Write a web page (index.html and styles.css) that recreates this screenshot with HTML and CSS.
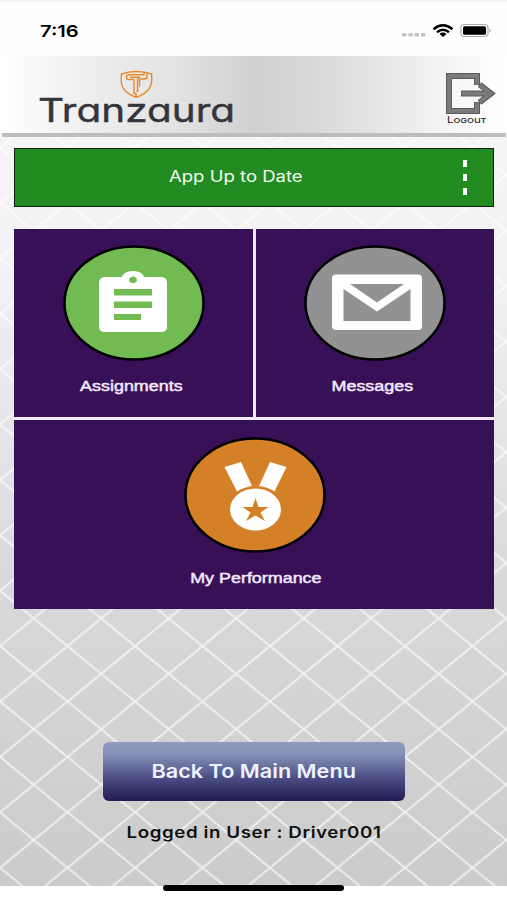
FILE: index.html
```
<!doctype html>
<html lang="en">
<head>
<meta charset="utf-8">
<title>Tranzaura</title>
<meta name="viewport" content="width=device-width, initial-scale=1">
<link rel="stylesheet" href="styles.css">
</head>
<body>
<div class="status">
<span class="time">7:16</span>
<svg class="signal" width="92" height="16" viewBox="0 0 92 16">
<g fill="#c4c4c4"><rect x="2" y="10" width="4.500" height="3.500" rx="1"/><rect x="8.300" y="10" width="4.500" height="3.500" rx="1"/><rect x="14.600" y="10" width="4.500" height="3.500" rx="1"/><rect x="20.900" y="10" width="4.500" height="3.500" rx="1"/></g>
<g fill="none" stroke="#000" stroke-width="2.400"><path d="M33.500 6.200Q43 -1.600 52.500 6.200"/><path d="M37 9.200Q43 4.300 49 9.200"/></g>
<path d="M39.500 10.900Q43 8.200 46.500 10.900L43 14Z"/>
<rect x="61" y="1.500" width="27" height="12" rx="3.500" fill="#fff" stroke="#aaa" stroke-width="1.200"/>
<rect x="63" y="3.200" width="23" height="8.600" rx="1.500"/>
<path d="M89.500 5.500Q92 7.500 89.500 9.500Z" fill="#999"/>
</svg>
</div>
<header>
<svg class="logo" width="200" height="60" viewBox="0 0 200 60" role="img" aria-label="Tranzaura">
<g fill="none" stroke="#e8892a" stroke-width="1.400" stroke-linejoin="round" stroke-linecap="round">
<path d="M98.500 2.500Q90 2.500 83.500 5C82 16 84 23 98.500 28.300C112 23 115 16 113.500 5Q107 2.500 98.500 2.500"/>
<path d="M109 3.500V7.500Q109 10 106.500 10H101.500V17M98 28V24.500H96V10.500H90.500Q88.500 10.500 88.500 8.500Q88.500 5.800 91 5.800H106V3.500"/>
<path d="M92.500 8.200H101.500Q99.500 8.200 99.500 11V21.500"/>
</g>
<circle cx="99.500" cy="22" r="1.100" fill="#e8892a"/>
<text x="0" y="53.300" textLength="197" lengthAdjust="spacingAndGlyphs">Tranzaura</text>
</svg>
<a class="logout">
<svg width="52" height="43" viewBox="0 0 52 43">
<g fill="none" stroke="#5a5a5a" stroke-width="6"><path d="M32 13V4H4V39H32V30"/><path d="M16 21.500H45"/><path d="M34.500 12.500L46 21.500L34.500 30.500"/></g>
<g fill="none" stroke="#7b7b7b" stroke-width="4"><path d="M32 12.500V4H4V39H32V30.500"/><path d="M17 21.500H45"/><path d="M35 13L45.500 21.500L35 30"/></g>
</svg>
<span>Logout</span>
</a>
</header>
<main>
<svg class="mesh" width="507" height="749">
<defs><pattern id="diamonds" width="67.500" height="55.400" patternUnits="userSpaceOnUse" patternTransform="translate(0 10.500)">
<path d="M-6.750 -5.540L74.250 60.940M-6.750 60.940L74.250 -5.540"/>
</pattern></defs>
<rect width="507" height="749" fill="url(#diamonds)"/>
</svg>
<div class="update">
<span class="wide">App Up to Date</span>
<div class="dots"><i></i><i></i><i></i></div>
</div>
<div class="tiles">
<a class="tile assign">
<svg width="142" height="116" viewBox="0 0 142 116">
<ellipse cx="71" cy="58" rx="69.500" ry="56.500" fill="#72bb53"/>
<path fill="#fff" fill-rule="evenodd" d="M42 32H59C61 24 79 24 81 32H98Q104 32 104 38V82Q104 87 98 87H42Q36 87 36 82V38Q36 32 42 32ZM70 31.500a4 3.400 0 1 0 .01 0ZM51 44V50.500H89V44ZM51 56.500V63H89V56.500ZM51 69V75H78V69Z"/>
</svg>
<span>Assignments</span>
</a>
<a class="tile">
<svg width="142" height="116" viewBox="0 0 142 116">
<ellipse cx="71" cy="58" rx="69.500" ry="56.500" fill="#929292"/>
<path fill="#fff" fill-rule="evenodd" d="M32 29.500H114Q118 29.500 118 33.500V81Q118 85 114 85H32Q28 85 28 81V33.500Q28 29.500 32 29.500ZM39.500 44V76H106.500V44L73 66.500ZM46 39L73 57.500L100 39Z"/>
</svg>
<span>Messages</span>
</a>
<a class="tile perf">
<svg width="142" height="116" viewBox="0 0 142 116">
<ellipse cx="71" cy="58" rx="69.500" ry="56.500" fill="#d48027"/>
<path fill="#fff" d="M40.500 30L57 25L68 49Q60 50 53 54.500ZM102.500 30L86 25L75 49Q84 50 90.500 54.500Z"/>
<ellipse cx="71.500" cy="72.500" rx="25.500" ry="21" fill="#fff"/>
<path fill="#d48027" d="M71.500 61L74.500 70H84.500L76.500 75.500L81 84L71.500 78.500L62 84L66.500 75.500L58.500 70H68.500Z"/>
</svg>
<span>My Performance</span>
</a>
</div>
<button><span class="wide">Back To Main Menu</span></button>
<p class="user"><span class="wide">Logged in User : Driver001</span></p>
</main>
<footer><div class="home"></div></footer>
</body>
</html>
```
FILE: styles.css
```
* { box-sizing:border-box; margin:0; }
body { height:900px; overflow:hidden; display:flex; flex-direction:column; background:#fff; font-family:Inter, sans-serif; }
.wide { display:inline-block; transform:scaleX(1.14); }
.status { height:56px; padding:4px 15px 0 40px; display:flex; align-items:center; justify-content:space-between; background:#fefefe; border-top:2px solid #f5f5f5; }
.time { font-size:16.5px; font-weight:600; transform:scaleX(1.22); transform-origin:left; }
header { height:81px; margin:0 1px 0 2px; padding:13px 9px 0 35px; display:flex; justify-content:space-between; align-items:flex-start; background:linear-gradient(90deg, #fff, #f0f0f0 15%, #e2e2e2 35%, #d0d0d0 50%, #dcdcdc 66%, #eee 82%, #fdfdfd 97%); border-bottom:4px solid #bdbdbd; }
.logo { margin-left:1px; }
.logo text { font-size:33px; font-weight:400; font-feature-settings:"cv11", "ss01"; fill:#34343c; stroke:#34343c; stroke-width:.4; stroke-linejoin:round; }
.logout { width:52px; margin-top:3px; }
.logout svg { display:block; }
.logout span { display:block; margin-left:2px; font-size:9px; line-height:9px; color:#222; font-variant:small-caps; transform:scaleX(1.29); transform-origin:left; }
main { position:relative; height:749px; padding:11px 13px 0 14px; display:flex; flex-direction:column; align-items:center; background:linear-gradient(#f5f5f5, #f2f2f2 18%, #e6e6e6 38%, #d8d8d8 62%, #cbcbcb); }
.mesh { position:absolute; top:0; left:0; }
.mesh path { stroke:#fff; stroke-width:2; opacity:.65; }
.update, .tiles, button, .user { position:relative; }
.update { width:100%; height:59px; padding:0 26px 3px 154px; display:flex; align-items:center; justify-content:space-between; background:#228b22; border:1px solid #0b1f0b; color:#f2fff2; font-size:15.5px; }
.update .wide { transform:scaleX(1.195); transform-origin:left; }
.dots { display:flex; flex-direction:column; gap:7px; padding-top:3px; }
.dots i { width:4px; height:7px; background:#fff; }
.tiles { width:100%; margin-top:22px; display:grid; grid-template-columns:1fr 1fr; grid-template-rows:188px 189px; gap:3px; background:#f1e9f4; }
.tile { display:flex; flex-direction:column; align-items:center; padding-top:16px; background:#371058; color:#f4e8fb; font:15.5px "Liberation Sans", sans-serif; -webkit-text-stroke:.5px #f4e8fb; }
.tile ellipse:first-child { stroke:#000; stroke-width:2.5; }
.tile span { margin:16px 4px 0 0; transform:scaleX(1.155); }
.assign svg { margin-left:2px; }
.perf { grid-column:span 2; padding-top:17px; }
.perf svg { margin-left:2px; }
.perf span { margin:16px 0 0 4px; }
button { width:302px; height:59px; margin-top:133px; border:0; border-radius:6px; background:linear-gradient(#8e9bc0, #8593b8 20%, #4c4f86 60%, #221b52); color:#eef2ff; font:600 19px Inter, sans-serif; }
.user { margin-top:21px; font-size:16px; font-weight:600; color:#111; }
.user .wide { letter-spacing:.5px; transform:scaleX(1.17); }
footer { height:14px; }
.home { width:181px; height:6px; margin:-1px auto 0; border-radius:3px; background:#000; position:relative; }
```
